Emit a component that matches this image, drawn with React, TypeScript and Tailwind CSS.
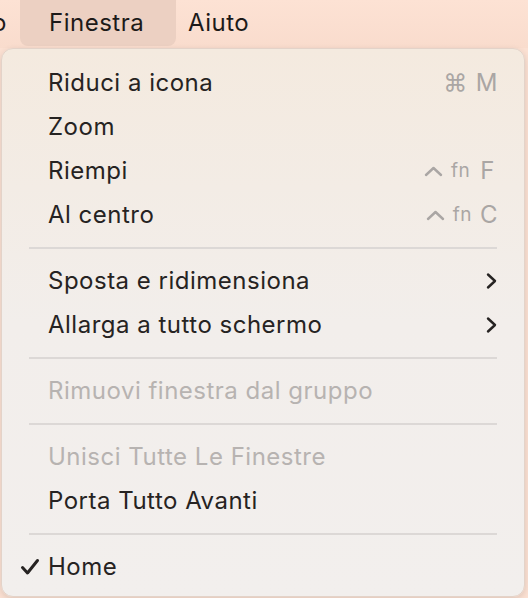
import React from "react";

const Chevron = () => (
  <svg width="14" height="18" viewBox="0 0 14 18" fill="none">
    <path d="M4 2.5 L11 9 L4 15.5" stroke="#262322" strokeWidth="2.4" strokeLinecap="round" strokeLinejoin="round" />
  </svg>
);

const Caret = () => (
  <svg width="19" height="12" viewBox="0 0 19 12" fill="none">
    <path d="M2 10 L9.5 3 L17 10" stroke="#aaa6a4" strokeWidth="2.4" strokeLinecap="round" strokeLinejoin="round" />
  </svg>
);

const Check = () => (
  <svg width="20" height="18" viewBox="0 0 20 18" fill="none">
    <path d="M2.5 9.5 L7.5 15 L17.5 2.5" stroke="#262322" strokeWidth="3" strokeLinecap="round" strokeLinejoin="round" />
  </svg>
);

const Row = ({
  label,
  disabled,
  right,
  check,
}: {
  label: string;
  disabled?: boolean;
  right?: React.ReactNode;
  check?: boolean;
}) => (
  <div className="h-[44px] flex items-center pr-[26px]">
    <div className="w-[46px] flex justify-end pr-[8px]">{check ? <Check /> : null}</div>
    <div className={"flex-1 " + (disabled ? "text-[#b7b3b1]" : "text-[#262322]")}>{label}</div>
    {right}
  </div>
);

const Sep = () => (
  <div className="h-[22px] flex items-center px-[27px]">
    <div className="h-[2px] w-full bg-[#dcd8d6]" />
  </div>
);

export default function App() {
  return (
    <div
      className="w-[528px] h-[598px] overflow-hidden bg-[#fbe0d2] text-[24px] tracking-[0.5px]"
      style={{ fontFamily: "Inter, 'Noto Sans', sans-serif" }}
    >
      <div className="h-[48px] flex items-start text-[#1d1a19] bg-gradient-to-b from-[#fde2d4] to-[#f9dccd]">
        <div className="h-[46px] flex items-center -ml-[8px] w-[28px]">
          <span>o</span>
        </div>
        <div className="h-[46px] w-[156px] rounded-b-[8px] bg-[#ecd0c2] flex items-center pl-[29px]">
          Finestra
        </div>
        <div className="h-[46px] flex items-center pl-[12px]">Aiuto</div>
      </div>
      <div className="relative">
        <div className="ml-[1px] w-[524px] h-[549px] rounded-[12px] border border-[#e3d3c9] bg-gradient-to-b from-[#f4eadf] via-[#f2eeeb] to-[#f2efed] shadow-[0_2px_6px_rgba(0,0,0,0.12)] pt-[12px]">
          <Row
            label="Riduci a icona"
            right={
              <div className="flex items-center gap-[8px] text-[#aaa6a4]">
                <span className="text-[24px]">⌘</span>
                <span>M</span>
              </div>
            }
          />
          <Row label="Zoom" />
          <Row
            label="Riempi"
            right={
              <div className="flex items-center gap-[8px] text-[#aaa6a4]">
                <Caret />
                <span className="text-[19px]">fn</span>
                <span className="pl-[2px] pr-[3px]">F</span>
              </div>
            }
          />
          <Row
            label="Al centro"
            right={
              <div className="flex items-center gap-[8px] text-[#aaa6a4]">
                <Caret />
                <span className="text-[19px]">fn</span>
                <span>C</span>
              </div>
            }
          />
          <Sep />
          <Row label="Sposta e ridimensiona" right={<Chevron />} />
          <Row label="Allarga a tutto schermo" right={<Chevron />} />
          <Sep />
          <Row label="Rimuovi finestra dal gruppo" disabled />
          <Sep />
          <Row label="Unisci Tutte Le Finestre" disabled />
          <Row label="Porta Tutto Avanti" />
          <Sep />
          <Row label="Home" check />
        </div>
      </div>
    </div>
  );
}
